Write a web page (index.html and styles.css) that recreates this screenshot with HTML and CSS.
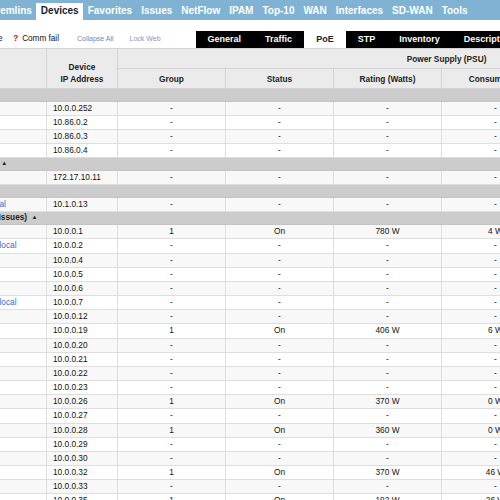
FILE: index.html
```html
<!DOCTYPE html>
<html>
<head>
	<link rel="stylesheet" href="styles.css">
</head>
<body>
<div class="page">
	<div class="topnav">
		<a href="#">Gremlins</a>
		<a href="#" class="active">Devices</a>
		<a href="#">Favorites</a>
		<a href="#">Issues</a>
		<a href="#">NetFlow</a>
		<a href="#">IPAM</a>
		<a href="#">Top-10</a>
		<a href="#">WAN</a>
		<a href="#">Interfaces</a>
		<a href="#">SD-WAN</a>
		<a href="#">Tools</a>
	</div>
	<div class="toolbar">
		<div class="legend">
			<span class="key"><b class="down">&#10006;</b> Offline</span>
			<span class="key"><b class="q">?</b>Comm fail</span>
		</div>
		<a href="#" class="tool">Collapse All</a>
		<a href="#" class="tool visited">Lock Web</a>
		<div class="tabs">
			<a href="#">General</a>
			<a href="#">Traffic</a>
			<a href="#" class="on">PoE</a>
			<a href="#">STP</a>
			<a href="#">Inventory</a>
			<a href="#">Description</a>
			<a href="#">Config</a>
		</div>
	</div>
	<table class="grid">
		<colgroup><col class="c-name"><col class="c-ip"><col class="c-w" span="6"></colgroup>
		<thead>
			<tr><th rowspan="2"></th><th rowspan="2">Device<br>IP Address</th><th colspan="6" class="psu">Power Supply (PSU)</th></tr>
			<tr><th>Group</th><th>Status</th><th>Rating (Watts)</th><th>Consumption</th><th>Available</th><th>Devices</th></tr>
		</thead>
		<tbody>
			<tr class="grp"><td colspan="8">Lab <span class="tri">&#9650;</span></td></tr>
			<tr class="alt"><td>fw-edge</td><td class="ip">10.0.0.252</td><td>-</td><td>-</td><td>-</td><td>-</td><td>-</td><td>-</td></tr>
			<tr><td>rtr-86-2</td><td class="ip">10.86.0.2</td><td>-</td><td>-</td><td>-</td><td>-</td><td>-</td><td>-</td></tr>
			<tr class="alt"><td>rtr-86-3</td><td class="ip">10.86.0.3</td><td>-</td><td>-</td><td>-</td><td>-</td><td>-</td><td>-</td></tr>
			<tr><td>rtr-86-4</td><td class="ip">10.86.0.4</td><td>-</td><td>-</td><td>-</td><td>-</td><td>-</td><td>-</td></tr>
			<tr class="grp"><td colspan="8">Warehouse 2 <span class="tri">&#9650;</span></td></tr>
			<tr class="alt"><td>wh-ap</td><td class="ip">172.17.10.11</td><td>-</td><td>-</td><td>-</td><td>-</td><td>-</td><td>-</td></tr>
			<tr class="grp"><td colspan="8">Remote <span class="tri">&#9650;</span></td></tr>
			<tr class="alt"><td><a href="#">sw-lab-201.local</a></td><td class="ip">10.1.0.13</td><td>-</td><td>-</td><td>-</td><td>-</td><td>-</td><td>-</td></tr>
			<tr class="grp"><td colspan="8">Core Sites (3 Issues) <span class="tri">&#9650;</span></td></tr>
			<tr class="alt"><td>core-01</td><td class="ip">10.0.0.1</td><td>1</td><td>On</td><td>780 W</td><td>4 W</td><td>776 W</td><td>2</td></tr>
			<tr><td><a href="#">core-switch-i2.local</a></td><td class="ip">10.0.0.2</td><td>-</td><td>-</td><td>-</td><td>-</td><td>-</td><td>-</td></tr>
			<tr class="alt"><td>acc-04</td><td class="ip">10.0.0.4</td><td>-</td><td>-</td><td>-</td><td>-</td><td>-</td><td>-</td></tr>
			<tr><td>acc-05</td><td class="ip">10.0.0.5</td><td>-</td><td>-</td><td>-</td><td>-</td><td>-</td><td>-</td></tr>
			<tr class="alt"><td>acc-06</td><td class="ip">10.0.0.6</td><td>-</td><td>-</td><td>-</td><td>-</td><td>-</td><td>-</td></tr>
			<tr><td><a href="#">core-switch-i7.local</a></td><td class="ip">10.0.0.7</td><td>-</td><td>-</td><td>-</td><td>-</td><td>-</td><td>-</td></tr>
			<tr class="alt"><td>acc-12</td><td class="ip">10.0.0.12</td><td>-</td><td>-</td><td>-</td><td>-</td><td>-</td><td>-</td></tr>
			<tr><td>poe-19</td><td class="ip">10.0.0.19</td><td>1</td><td>On</td><td>406 W</td><td>6 W</td><td>400 W</td><td>3</td></tr>
			<tr class="alt"><td>acc-20</td><td class="ip">10.0.0.20</td><td>-</td><td>-</td><td>-</td><td>-</td><td>-</td><td>-</td></tr>
			<tr><td>acc-21</td><td class="ip">10.0.0.21</td><td>-</td><td>-</td><td>-</td><td>-</td><td>-</td><td>-</td></tr>
			<tr class="alt"><td>acc-22</td><td class="ip">10.0.0.22</td><td>-</td><td>-</td><td>-</td><td>-</td><td>-</td><td>-</td></tr>
			<tr><td>acc-23</td><td class="ip">10.0.0.23</td><td>-</td><td>-</td><td>-</td><td>-</td><td>-</td><td>-</td></tr>
			<tr class="alt"><td>poe-26</td><td class="ip">10.0.0.26</td><td>1</td><td>On</td><td>370 W</td><td>0 W</td><td>370 W</td><td>0</td></tr>
			<tr><td>acc-27</td><td class="ip">10.0.0.27</td><td>-</td><td>-</td><td>-</td><td>-</td><td>-</td><td>-</td></tr>
			<tr class="alt"><td>poe-28</td><td class="ip">10.0.0.28</td><td>1</td><td>On</td><td>360 W</td><td>0 W</td><td>360 W</td><td>0</td></tr>
			<tr><td>acc-29</td><td class="ip">10.0.0.29</td><td>-</td><td>-</td><td>-</td><td>-</td><td>-</td><td>-</td></tr>
			<tr class="alt"><td>acc-30</td><td class="ip">10.0.0.30</td><td>-</td><td>-</td><td>-</td><td>-</td><td>-</td><td>-</td></tr>
			<tr><td>poe-32</td><td class="ip">10.0.0.32</td><td>1</td><td>On</td><td>370 W</td><td>46 W</td><td>324 W</td><td>5</td></tr>
			<tr class="alt"><td>acc-33</td><td class="ip">10.0.0.33</td><td>-</td><td>-</td><td>-</td><td>-</td><td>-</td><td>-</td></tr>
			<tr><td>poe-35</td><td class="ip">10.0.0.35</td><td>1</td><td>On</td><td>192 W</td><td>26 W</td><td>166 W</td><td>4</td></tr>
		</tbody>
	</table>
</div>
</body>
</html>
```

FILE: styles.css
```css
body {margin:0;font-family:"Liberation Sans", Arial, sans-serif;background:#fff;overflow:hidden;}
/* page is scrolled sideways: left part sits off screen */
.page {margin-left:-60px;width:1100px;}

.topnav {display:flex;align-items:flex-end;height:20px;background:#80b3d3;padding-left:44px;}
.topnav a {color:#fff;font-weight:bold;font-size:10px;text-decoration:none;padding:0 4.5px;height:17px;line-height:15px;white-space:nowrap;}
.topnav a.active {background:#fff;color:#1c1c2a;}

.toolbar {display:flex;align-items:flex-end;height:28px;white-space:nowrap;}
.legend {display:flex;justify-content:flex-end;width:119px;flex:none;font-size:8.2px;color:#111;line-height:17px;padding-bottom:1px;}
.key {margin-left:10.5px;}
.key .down {color:#c00;font-size:7px;}
.key .q {color:#e00;margin-right:4px;}
.tool {font-size:7px;color:#6f86c4;text-decoration:none;margin-left:18px;line-height:17px;padding-bottom:1px;}
.tool.visited {color:#9a8cc6;margin-left:16px;}
.tabs {display:flex;background:#000;margin-left:35px;height:17px;}
.tabs a {color:#fff;font-weight:bold;font-size:9px;text-decoration:none;padding:0 12px;line-height:17px;}
.tabs a.on {background:#fff;color:#222;}

.grid {border-collapse:collapse;table-layout:fixed;width:825px;font-size:8.3px;color:#111;}
.c-name {width:106px;}
.c-ip {width:71px;}
.c-w {width:108px;}
.grid th {background:#ebebeb;border:1px solid #d3d3d3;font-weight:bold;color:#222;line-height:12px;padding:3.5px 2px;vertical-align:bottom;}
.grid th.psu {padding-left:12px;}
.grid td {border:1px solid #dedede;border-top:none;line-height:13.17px;padding:0 4px;text-align:center;white-space:nowrap;overflow:hidden;background:#fff;}
.grid tr.alt td {background:#f8f8f8;}
.grid td:first-child {text-align:left;padding-left:5px;}
.grid td.ip {text-align:left;padding-left:6px;}
.grid td a {color:#2f6fcf;text-decoration:none;}
.grid tr.grp td {background:#cccccc;font-weight:bold;color:#222;line-height:11.8px;border:none;border-bottom:1px solid #c4c4c4;text-align:left;}
.tri {font-size:6px;margin-left:2px;vertical-align:1px;}
```
